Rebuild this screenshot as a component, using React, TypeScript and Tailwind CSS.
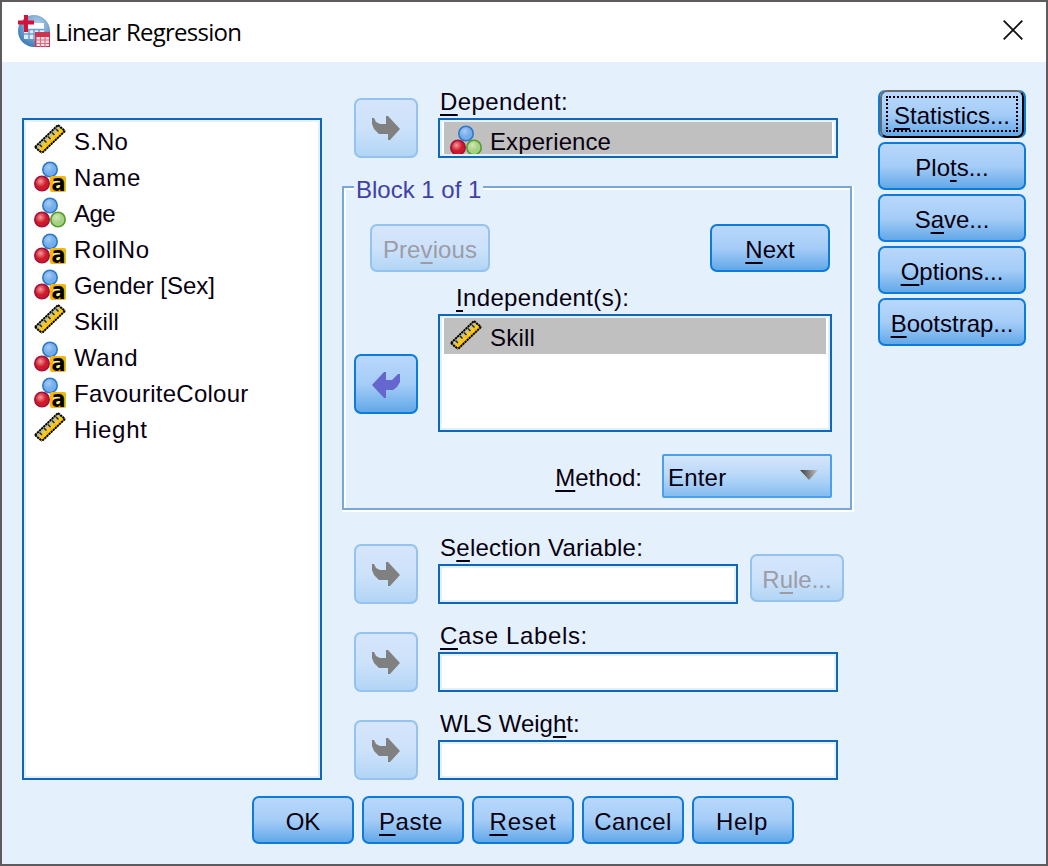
import React from "react";

type IconKind = "scale" | "nominal" | "string";

const FONT = "font-['Liberation_Sans',Arial,sans-serif] text-[24px] leading-[28px] text-[#08000f]";

function Label({ text, hot = -1, className = "" }: { text: string; hot?: number; className?: string }) {
  if (hot < 0) return <span className={`whitespace-pre ${className}`}>{text}</span>;
  return (
    <span className={`whitespace-pre ${className}`}>
      {text.slice(0, hot)}
      <span className="underline decoration-2 underline-offset-[4px] [text-decoration-skip-ink:none]">{text[hot]}</span>
      {text.slice(hot + 1)}
    </span>
  );
}

function Ball({ cx, cy, kind }: { cx: number; cy: number; kind: "blue" | "red" | "green" }) {
  const c = {
    blue: ["#a3cbf5", "#74adeb", "#2f78c8"],
    red: ["#f29a9a", "#cf1a2a", "#a3123c"],
    green: ["#d0e8b4", "#a5d183", "#559c2c"],
  }[kind];
  const id = `ball-${kind}`;
  return (
    <>
      <defs>
        <radialGradient id={id} cx="0.4" cy="0.35" r="0.65">
          <stop offset="0" stopColor={c[0]} />
          <stop offset="0.6" stopColor={c[1]} />
          <stop offset="1" stopColor={c[1]} />
        </radialGradient>
      </defs>
      <circle cx={cx} cy={cy} r="7.2" fill={`url(#${id})`} stroke={c[2]} strokeWidth="1.6" />
    </>
  );
}

function VarIcon({ kind }: { kind: IconKind }) {
  if (kind === "scale") {
    return (
      <svg width="32" height="32" viewBox="0 0 32 32" className="shrink-0 overflow-visible">
        <path d="M1 22 L24 0 L31 6 L8 28 Z" fill="#ffcc0a" />
        <path d="M1 22 L24 0 L27 2.500 L4 24.500 Z" fill="#c3c395" />
        <path d="M1 22 L24 0 M31 6 L8 28" fill="none" stroke="#000" strokeWidth="2" strokeDasharray="2.300 0.600" />
        <path d="M1 22 L8 28 M24 0 L31 6" fill="none" stroke="#000" strokeWidth="2" strokeDasharray="2.300 0.600" />
        <path d="M5.500 19.500 l2.500 2.500 M10 15 l2.500 2.500 M14 11.500 l2.500 2.500 M18 7.500 l2.500 2.500 M22 4 l2.500 2.500" stroke="#2b2b10" strokeWidth="1.500" />
        <path d="M8 24.500 L28 5.500" stroke="#f0ab4e" strokeWidth="1.600" strokeDasharray="2.500 3" />
      </svg>
    );
  }
  return (
    <svg width="32" height="32" viewBox="0 0 32 32" className="shrink-0 overflow-visible">
      <Ball cx={16} cy={8.5} kind="blue" />
      <Ball cx={8} cy={22.5} kind="red" />
      {kind === "nominal" ? (
        <Ball cx={24} cy={22.5} kind="green" />
      ) : (
        <>
          <rect x="16" y="15" width="16" height="16" rx="2" fill="#f5b60c" />
          <rect x="19" y="18" width="10" height="11" fill="#fff27a" />
          <text x="17.5" y="30" fontFamily="DejaVu Sans, sans-serif" fontWeight="bold" fontSize="23" textLength="14" lengthAdjust="spacingAndGlyphs" fill="#000">a</text>
        </>
      )}
    </svg>
  );
}

function Btn({ text, hot, className = "", disabled = false, focused = false }: { text: string; hot?: number; className?: string; disabled?: boolean; focused?: boolean }) {
  const look = disabled
    ? "border-[#93c3ee] bg-linear-to-b from-[#d5e5fb] via-[#cde2fb] to-[#b2d5f5] text-[#9c9ca6]"
    : focused
      ? "mx-[2px] border-t-[#666b70] border-l-[#666b70] border-r-black border-b-black bg-linear-to-b from-[#b9d7fc] via-[#a5cdf7] to-[#61a8e8] shadow-[-2px_0_0_#0c7bdc,2px_0_0_#0c7bdc]"
      : "border-[#0c7bdc] bg-linear-to-b from-[#b9d7fc] via-[#a5cdf7] to-[#61a8e8]";
  return (
    <button disabled={disabled} className={`relative flex h-12 shrink-0 items-center justify-center rounded-[7px] border-2 pt-[3px] ${look} ${className}`}>
      <Label text={text} hot={hot} />
      {focused && <span className="absolute inset-[4px] border-2 border-dotted border-black" />}
    </button>
  );
}

function ArrowBtn({ active = false }: { active?: boolean }) {
  return (
    <button
      className={`flex h-[60px] w-16 shrink-0 items-center justify-center rounded-[7px] border-2 ${
        active
          ? "border-[#0c7bdc] bg-linear-to-b from-[#b9d7fc] via-[#a5cdf7] to-[#61a8e8]"
          : "border-[#93c3ee] bg-linear-to-b from-[#d5e5fb] via-[#cde2fb] to-[#b2d5f5]"
      }`}
    >
      {active ? (
        <svg width="28" height="26" viewBox="0 0 28 26" className="mt-[2px]" fill="#6666cf">
          <path d="M0 13 L12 0 H14 V8 H20 L26 2 H28 V10 L25 15 L21 18 H14 V26 H12 Z" />
        </svg>
      ) : (
        <svg width="28" height="24" viewBox="0 0 28 24" fill="#808080">
          <path d="M28 13 L18 24 H16 V18 H7 L2 13 L0 8 V2 H2 L4 6 L8 8 H14 V0 H16 Z" />
        </svg>
      )}
    </button>
  );
}

function Field({ className = "", children }: { className?: string; children?: React.ReactNode }) {
  return (
    <div className={`shrink-0 overflow-hidden border-2 border-[#0e67b8] bg-white shadow-[inset_0_0_0_2px_#e4f0fc] ${className}`}>{children}</div>
  );
}

function LabeledField({ text, hot, top, spacing, fieldWidth, children }: { text: string; hot: number; top: string; spacing: string; fieldWidth: string; children?: React.ReactNode }) {
  return (
    <div className={`ml-3 flex h-[72px] items-end ${top}`}>
      <ArrowBtn />
      <div className="ml-5 flex flex-col">
        <Label text={text} hot={hot} className={`ml-[2px] h-[30px] ${spacing}`} />
        <Field className={`h-10 ${fieldWidth}`}>{children}</Field>
      </div>
      {text.startsWith("Selection") && <Btn text="Rule..." hot={1} disabled className="mb-[2px] ml-3 w-[94px]" />}
    </div>
  );
}

const variables: { name: string; kind: IconKind; tracking: string }[] = [
  { name: "S.No", kind: "scale", tracking: "tracking-[0.2px]" },
  { name: "Name", kind: "string", tracking: "tracking-[0.8px]" },
  { name: "Age", kind: "nominal", tracking: "tracking-[-0.5px]" },
  { name: "RollNo", kind: "string", tracking: "tracking-[0.6px]" },
  { name: "Gender [Sex]", kind: "string", tracking: "tracking-[-0.05px]" },
  { name: "Skill", kind: "scale", tracking: "tracking-[0.2px]" },
  { name: "Wand", kind: "string", tracking: "tracking-[0.6px]" },
  { name: "FavouriteColour", kind: "string", tracking: "tracking-[0.25px]" },
  { name: "Hieght", kind: "scale", tracking: "tracking-[0.7px]" },
];

export default function App() {
  return (
    <div className={`flex h-[866px] w-[1048px] flex-col overflow-hidden border-2 border-[#5f5b5d] bg-[#e4f0fc] ${FONT}`}>
      <header className="flex h-[60px] shrink-0 items-center bg-white pl-4 pr-[23px]">
        <svg width="32" height="32" viewBox="0 0 32 32" className="mt-[-2px]">
          <defs>
            <radialGradient id="globe" cx="0.6" cy="0.3" r="0.8">
              <stop offset="0" stopColor="#b4d0ea" />
              <stop offset="0.6" stopColor="#659bcc" />
              <stop offset="1" stopColor="#2f6fae" />
            </radialGradient>
          </defs>
          <circle cx="16" cy="16" r="16" fill="url(#globe)" />
          <path d="M6 8h20v6H6z" fill="#fff" />
          <path d="M6 14h20v10H6z" fill="#dfebf7" />
          <path d="M6 14.500h20 M6 19h20 M11 14v10 M16 14v10 M21 14v10" stroke="#6d9fd0" strokeWidth="1.5" />
          <path d="M0 7.500h16 M8 0v17" stroke="#d3123c" strokeWidth="4" />
          <rect x="17" y="17" width="15" height="15" fill="#cf3350" />
          <path d="M18.500 22h12.500v9H18.500z" fill="#f9dfe4" />
          <path d="M18 25h13 M18 28.500h13 M22.500 22v10 M27 22v10" stroke="#dc6c84" strokeWidth="1.200" />
        </svg>
        <h1 className="ml-[5px] flex-1 whitespace-nowrap font-['Open_Sans','Noto_Sans',sans-serif] text-[24px] tracking-[-0.75px] text-black">Linear Regression</h1>
        <svg width="20" height="20" viewBox="0 0 20 20" className="mt-[-4px]" stroke="#111" strokeWidth="1.9">
          <path d="M0.700 0.700 L19.300 19.300 M19.300 0.700 L0.700 19.300" />
        </svg>
      </header>

      <main className="flex h-[718px] shrink-0 pl-5">
        <Field className="mt-14 h-[662px] w-[300px] pt-[3px]">
          {variables.map((v) => (
            <div key={v.name} className="flex h-9 items-center pl-[10px]">
              <VarIcon kind={v.kind} />
              <Label text={v.name} className={`ml-[8px] mt-[1px] ${v.tracking}`} />
            </div>
          ))}
        </Field>

        <section className="ml-5 w-[512px] shrink-0">
          <LabeledField text="Dependent:" hot={0} top="mt-[24px]" spacing="tracking-[0.4px]" fieldWidth="w-[400px]">
            <div className="mx-1 my-[2px] flex h-8 items-start overflow-hidden bg-[#c0c0c0] pl-[6px] pt-[3px]">
              <VarIcon kind="nominal" />
              <Label text="Experience" className="ml-[8px] mt-[3px] tracking-[0.1px]" />
            </div>
          </LabeledField>

          <div className="mt-7 h-[326px] w-[512px] border-b-2 border-r-2 border-white">
            <div className="relative h-[324px] w-[510px] border-2 border-[#79a7d6] shadow-[inset_2px_2px_0_#fff]">
              <span className="absolute -top-[12px] left-[10px] bg-[#e4f0fc] pl-[2px] pr-[2px] text-[#4040a8]">Block 1 of 1</span>
              <div className="flex justify-between pl-[26px] pr-5 pt-9">
                <Btn text="Previous" hot={3} disabled className="w-[120px] tracking-[0.1px]" />
                <Btn text="Next" hot={0} className="w-[120px]" />
              </div>
              <Label text="Independent(s):" hot={0} className="ml-[112px] mt-[12px] block h-[30px] tracking-[0.35px]" />
              <div className="flex items-end pl-[10px]">
                <div className="mb-[18px]">
                  <ArrowBtn active />
                </div>
                <Field className="ml-5 h-[118px] w-[394px]">
                  <div className="mx-1 mt-[2px] flex h-9 items-center bg-[#c0c0c0] pl-[6px] pt-[2px]">
                    <VarIcon kind="scale" />
                    <Label text="Skill" className="ml-[8px] mt-[1px] tracking-[0.2px]" />
                  </div>
                </Field>
              </div>
              <div className="mt-[22px] flex items-center justify-end pr-[18px]">
                <Label text="Method:" hot={0} className="mt-[3px]" />
                <div className="ml-5 flex h-11 w-[170px] items-center justify-between rounded-[2px] border-2 border-[#4ba0ec] bg-linear-to-b from-[#d5e5fb] via-[#b7d7f8] to-[#86bdf0] pl-1 pr-3">
                  <Label text="Enter" className="mt-[3px] tracking-[0.2px]" />
                  <svg width="18" height="10" viewBox="0 0 18 10" className="mt-[-3px]">
                    <defs>
                      <linearGradient id="caret">
                        <stop offset="0" stopColor="#3d3d3d" />
                        <stop offset="1" stopColor="#c4c4c4" />
                      </linearGradient>
                    </defs>
                    <path d="M0 0H18L9 10Z" fill="url(#caret)" />
                  </svg>
                </div>
              </div>
            </div>
          </div>

          <LabeledField text="Selection Variable:" hot={1} top="mt-5" spacing="tracking-[0.25px]" fieldWidth="w-[300px]" />
          <LabeledField text="Case Labels:" hot={0} top="mt-4" spacing="tracking-[0.65px]" fieldWidth="w-[400px]" />
          <LabeledField text="WLS Weight:" hot={8} top="mt-4" spacing="tracking-[0px]" fieldWidth="w-[400px]" />
        </section>

        <aside className="ml-6 mt-7 flex w-[148px] flex-col gap-1">
          <Btn text="Statistics..." hot={0} focused />
          <Btn text="Plots..." hot={3} />
          <Btn text="Save..." hot={1} />
          <Btn text="Options..." hot={0} />
          <Btn text="Bootstrap..." hot={0} />
        </aside>
      </main>

      <footer className="mt-4 flex gap-2 pl-[250px]">
        <Btn text="OK" className="w-[102px]" />
        <Btn text="Paste" hot={0} className="w-[102px] pr-1 tracking-[0.5px]" />
        <Btn text="Reset" hot={0} className="w-[102px] tracking-[0.9px]" />
        <Btn text="Cancel" className="w-[102px] tracking-[0.5px]" />
        <Btn text="Help" className="w-[102px] pr-[2px] tracking-[0.7px]" />
      </footer>
    </div>
  );
}
